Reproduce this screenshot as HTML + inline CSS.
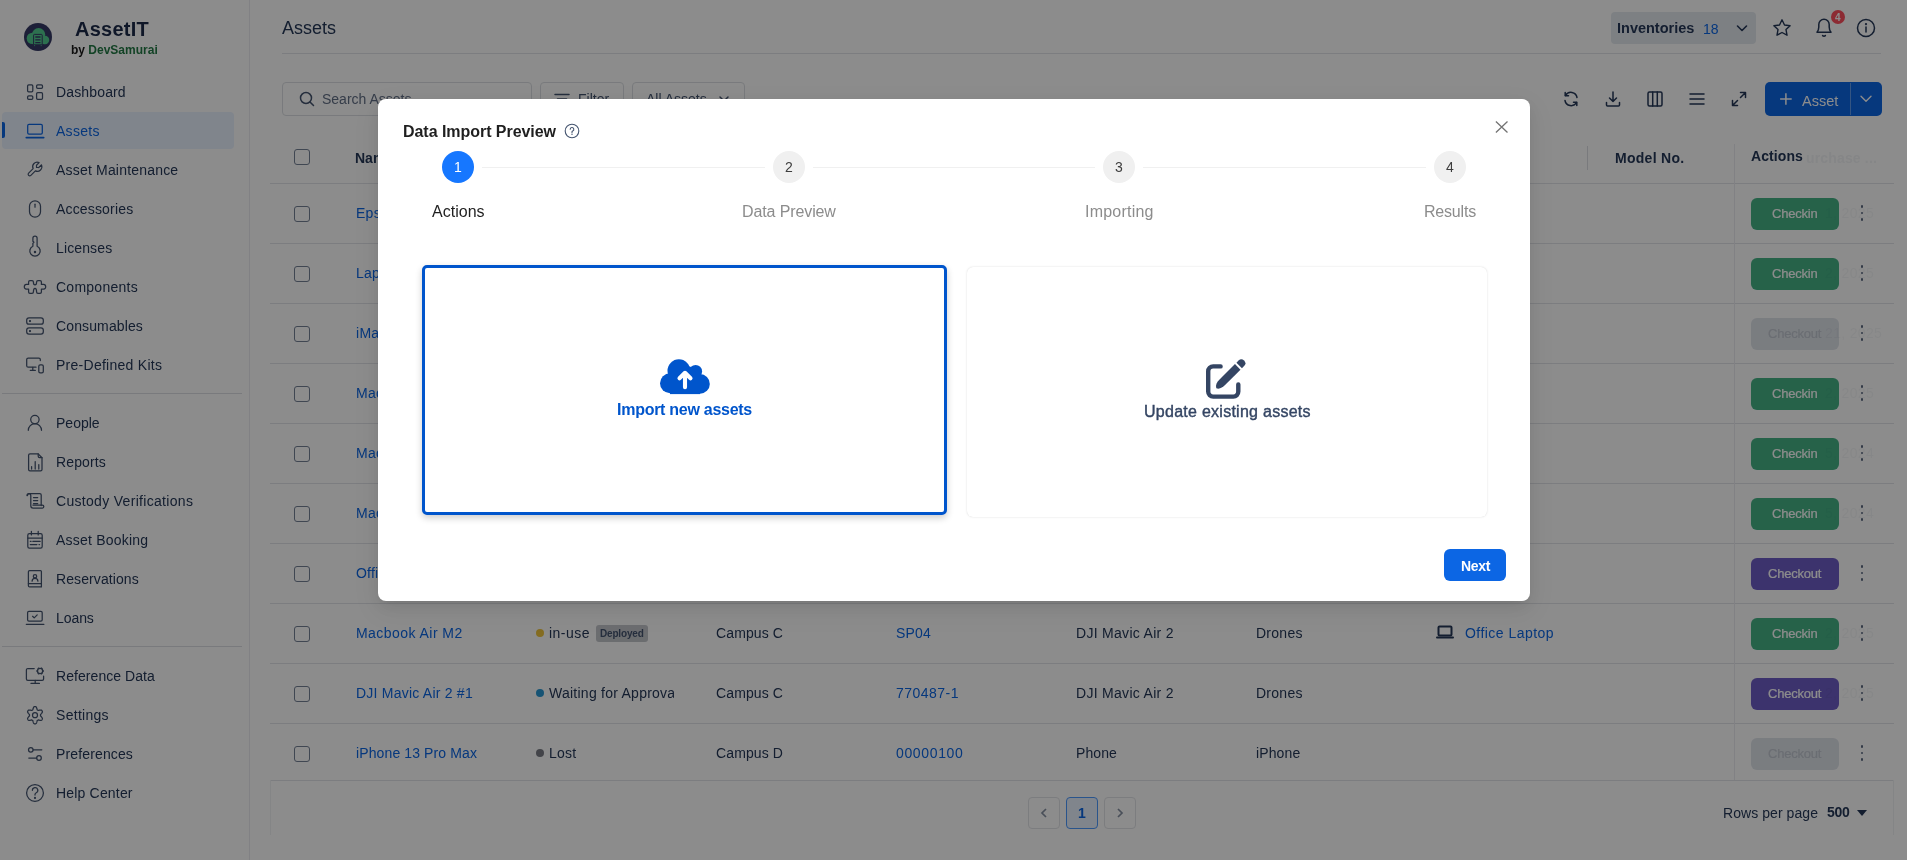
<!DOCTYPE html>
<html><head><meta charset="utf-8">
<style>
*{box-sizing:border-box;margin:0;padding:0}
html,body{width:1907px;height:860px;overflow:hidden;background:#fff;font-family:"Liberation Sans",sans-serif;color:#253858}
.abs{position:absolute}
.ico{position:absolute;width:18px;height:18px;fill:none;stroke-width:1.4;stroke-linecap:round;stroke-linejoin:round}
.txt{position:absolute;white-space:nowrap;will-change:transform}
.hline{position:absolute;height:1px;background:#e2e4e9}
.vline{position:absolute;width:1px;background:#ebecf0}
.cb{position:absolute;width:16px;height:16px;border:1.3px solid #758195;border-radius:3px;background:#fff}
.btn{position:absolute;height:32px;border-radius:6px;font-size:13.5px;line-height:32px;text-align:center;color:#fff;font-weight:500}
.kebab{position:absolute;width:3px;height:16px}
.kebab i{position:absolute;left:.2px;width:2.6px;height:2.6px;border-radius:50%;background:#5b6880}
.pg{position:absolute;width:32px;height:32px;border:1px solid #e2e4e8;border-radius:4px;background:#fff}
.pg svg{position:absolute;left:-1px;top:-1px}
.tb{position:absolute;height:34px;border:1px solid #dcdfe4;border-radius:4px;background:#fff}
#mask{position:absolute;left:0;top:0;width:1907px;height:860px;background:rgba(0,0,0,0.45)}
#modal{position:absolute;left:378px;top:99px;width:1152px;height:502px;background:#fff;border-radius:8px;box-shadow:0 6px 16px rgba(0,0,0,.08),0 3px 6px -4px rgba(0,0,0,.12),0 9px 28px 8px rgba(0,0,0,.05)}
</style></head><body>
<!-- SIDEBAR -->
<div class="abs" style="left:0;top:0;width:250px;height:860px;background:#fff;border-right:1px solid #ebecf0">
  <svg class="abs" style="left:24px;top:23px" width="28" height="28" viewBox="0 0 28 28">
    <circle cx="14" cy="14" r="14" fill="#363a66"/>
    <g fill="#52cc90"><circle cx="14.6" cy="11.6" r="6.6"/><circle cx="8.4" cy="15.4" r="5.7"/><circle cx="21.1" cy="17" r="4.15"/><rect x="8.4" y="15" width="12.7" height="6.1"/></g>
    <rect x="9.6" y="11.4" width="8.6" height="10.4" rx=".8" fill="#52cc90" stroke="#363a66" stroke-width="1"/>
    <path d="M11.3 14h5.2M11.3 16.8h5.2M11.3 19.6h5.2" stroke="#363a66" stroke-width="1.3"/>
    <path d="M10.6 22.3v.8M17.2 22.3v.8" stroke="#52cc90" stroke-width="1"/>
  </svg>
  <div class="txt" style="left:75px;top:18.6px;font-size:20px;line-height:20px;font-weight:700;color:#1d2b4a;letter-spacing:.25px">AssetIT</div>
  <div class="txt" style="left:70.5px;top:44.2px;font-size:12px;line-height:12px;font-weight:700;color:#1b1b1b;letter-spacing:0">by <span style="color:#237a45">DevSamurai</span></div>
<div class="txt" style="left:56.3px;top:85.35px;font-size:14px;line-height:14px;color:#253858;letter-spacing:0.146px;">Dashboard</div>
<div class="abs" style="left:2px;top:112px;width:231.5px;height:37px;border-radius:4px;background:#e9f2ff"></div>
<div class="abs" style="left:2px;top:122px;width:3px;height:16px;background:#0c66e4;border-radius:0 2px 2px 0"></div>
<div class="txt" style="left:56.3px;top:124.35px;font-size:14px;line-height:14px;color:#0c66e4;letter-spacing:0.281px;">Assets</div>
<div class="txt" style="left:56.3px;top:163.35px;font-size:14px;line-height:14px;color:#253858;letter-spacing:0.190px;">Asset Maintenance</div>
<div class="txt" style="left:56.3px;top:202.35px;font-size:14px;line-height:14px;color:#253858;letter-spacing:0.166px;">Accessories</div>
<div class="txt" style="left:56.3px;top:241.35px;font-size:14px;line-height:14px;color:#253858;letter-spacing:0.131px;">Licenses</div>
<div class="txt" style="left:56.3px;top:280.35px;font-size:14px;line-height:14px;color:#253858;letter-spacing:0.252px;">Components</div>
<div class="txt" style="left:56.3px;top:319.35px;font-size:14px;line-height:14px;color:#253858;letter-spacing:0.127px;">Consumables</div>
<div class="txt" style="left:56.3px;top:358.35px;font-size:14px;line-height:14px;color:#253858;letter-spacing:0.267px;">Pre-Defined Kits</div>
<div class="txt" style="left:56.3px;top:416.35px;font-size:14px;line-height:14px;color:#253858;letter-spacing:0.001px;">People</div>
<div class="txt" style="left:56.3px;top:455.35px;font-size:14px;line-height:14px;color:#253858;letter-spacing:0.140px;">Reports</div>
<div class="txt" style="left:56.3px;top:494.35px;font-size:14px;line-height:14px;color:#253858;letter-spacing:0.308px;">Custody Verifications</div>
<div class="txt" style="left:56.3px;top:533.35px;font-size:14px;line-height:14px;color:#253858;letter-spacing:0.208px;">Asset Booking</div>
<div class="txt" style="left:56.3px;top:572.35px;font-size:14px;line-height:14px;color:#253858;letter-spacing:0.091px;">Reservations</div>
<div class="txt" style="left:56.3px;top:611.35px;font-size:14px;line-height:14px;color:#253858;letter-spacing:-0.069px;">Loans</div>
<div class="txt" style="left:56.3px;top:669.35px;font-size:14px;line-height:14px;color:#253858;letter-spacing:0.060px;">Reference Data</div>
<div class="txt" style="left:56.3px;top:708.35px;font-size:14px;line-height:14px;color:#253858;letter-spacing:0.289px;">Settings</div>
<div class="txt" style="left:56.3px;top:747.35px;font-size:14px;line-height:14px;color:#253858;letter-spacing:0.138px;">Preferences</div>
<div class="txt" style="left:56.3px;top:786.35px;font-size:14px;line-height:14px;color:#253858;letter-spacing:0.181px;">Help Center</div>
<svg class="abs" style="left:0;top:0" width="250" height="860" viewBox="0 0 250 860" fill="none" stroke="#44546f" stroke-width="1.25" stroke-linecap="round" stroke-linejoin="round">
<rect x="27.6" y="84.8" width="5.2" height="7.1" rx="1.1"/><rect x="36.6" y="84.8" width="5.9" height="3.5" rx="1.1"/>
<rect x="27.6" y="95.8" width="5.2" height="3.5" rx="1.1"/><rect x="36.6" y="92.6" width="5.9" height="6.7" rx="1.1"/>
<g stroke="#0c66e4"><rect x="27.7" y="124.4" width="14.6" height="9.6" rx="1.3"/><path d="M26.3 137.6h17.4" stroke-width="1.7"/></g>
<g transform="translate(26,160) scale(0.75)"><path d="M17 10h-3v-3l3.5-3.5a6 6 0 0 0-8 8l-6 6a2 2 0 0 0 3 3l6-6a6 6 0 0 0 8-8l-3.5 3.5" stroke-width="1.6"/></g>
<rect x="29.5" y="200.8" width="11" height="16.4" rx="5.5"/><path d="M35 204.2v3"/>
<path d="M32.9 246.24V243.2L33.9 242.2L32.9 241.2V238.2A2.1 2.1 0 0 1 37.1 238.2V246.24A5.2 5.2 0 1 1 32.9 246.24z"/><circle cx="35" cy="252" r=".6" fill="#44546f"/>
<path d="M28.6 284.4V282Q28.6 280.6 30 280.6H32Q33.4 280.6 33.4 282C33.4 283.5 34 284.9 35 284.9C36 284.9 36.6 283.5 36.6 282Q36.6 280.6 38 280.6H40Q41.4 280.6 41.4 282V284.4H43.6C46.3 284.4 46.5 289 43.6 289H41.4V292Q41.4 293.4 40 293.4H38Q36.6 293.4 36.6 292C36.6 290 36 288.4 35 288.4C34 288.4 33.4 290 33.4 292Q33.4 293.4 32 293.4H30Q28.6 293.4 28.6 292V289H26.4C23.5 289 23.7 284.4 26.4 284.4Z"/>
<rect x="26.7" y="317.8" width="16.6" height="6.4" rx="2.3"/><rect x="26.7" y="327.8" width="16.6" height="6.2" rx="2.3"/>
<circle cx="30" cy="321" r=".5" fill="#44546f"/><circle cx="30" cy="331" r=".5" fill="#44546f"/>
<path d="M40.3 360.6V359.6a1.5 1.5 0 0 0-1.5-1.5H28.2a1.5 1.5 0 0 0-1.5 1.5v6.1a1.5 1.5 0 0 0 1.5 1.5H36"/><path d="M30.3 370.4h5M32.8 367.3v3.1"/><rect x="38.8" y="364.9" width="4.5" height="8" rx="1.4"/>
<circle cx="34.9" cy="419.6" r="4.2"/><path d="M28.3 430.3a6.6 6.6 0 0 1 13.2 0"/>
<path d="M38.2 453.9H30a1.4 1.4 0 0 0-1.4 1.4v14.3a1.4 1.4 0 0 0 1.4 1.4h10.6a1.4 1.4 0 0 0 1.4-1.4V457.7z"/><path d="M38.2 453.9v2.4a1.4 1.4 0 0 0 1.4 1.4H42"/><path d="M31.6 469v-2.4M35.2 469v-7.4M38.8 469v-4.4"/>
<path d="M29.4 493.6h10.4a1.4 1.4 0 0 1 1.4 1.4v10.6"/><path d="M27 495.5a1.9 1.9 0 0 1 3.8 0v10.3a2.3 2.3 0 0 0 2.3 2.3h9.2a1.5 1.5 0 0 0 0-3H32.9"/><path d="M29.4 493.6a1.9 1.9 0 0 0-1.9 1.9"/><path d="M33.5 497.6h4.2M33.5 500.6h4.2M33.5 503.6h4.2"/>
<rect x="27.8" y="533.6" width="14.4" height="14.5" rx="1.6"/><path d="M31.4 531.3v3.6M38.2 531.3v3.6M27.8 538h14.4M30.3 541.3h.8M32.8 541.3h7.4M30.3 544.6h6.6M39 544.6h.5"/>
<path d="M29.6 570.6h10.9a.9.9 0 0 1 .9.9v15.4H29.6a1.2 1.2 0 0 1-1.2-1.2V571.8a1.2 1.2 0 0 1 1.2-1.2z"/><path d="M28.4 583.6h13"/><circle cx="35" cy="576.2" r="1.7"/><path d="M32.1 581.2a2.9 2.9 0 0 1 5.8 0"/>
<rect x="27.6" y="611.4" width="14.6" height="9.6" rx="1.3"/><path d="M26.3 624.3h17.6"/><path d="M32.6 616.3l1.6 1.6 3-3"/>
<path d="M34.2 668.5h-6.4a1.4 1.4 0 0 0-1.4 1.4v9a1.4 1.4 0 0 0 1.4 1.4h14.4a1.4 1.4 0 0 0 1.4-1.4v-2.7"/><path d="M31 683.4h8.4M35.2 680.3v3.1"/>
<circle cx="40.1" cy="671" r="2.6" stroke-width="1.3"/><path d="M42.90 671.00L43.90 671.00M41.50 668.58L42.00 667.71M38.70 668.58L38.20 667.71M37.30 671.00L36.30 671.00M38.70 673.42L38.20 674.29M41.50 673.42L42.00 674.29" stroke-width="1.7" stroke-linecap="butt"/>
<path d="M40.51 715.20 L40.50 714.95 L40.49 714.69 L40.62 714.42 L40.92 714.10 L41.26 713.74 L41.61 713.34 L41.93 712.90 L42.21 712.44 L42.41 711.97 L42.40 711.57 L42.25 711.23 L42.08 710.90 L41.89 710.58 L41.69 710.27 L41.36 710.06 L40.88 710.01 L40.36 710.03 L39.84 710.11 L39.33 710.23 L38.86 710.35 L38.45 710.47 L38.16 710.45 L37.96 710.31 L37.76 710.18 L37.54 710.06 L37.33 709.94 L37.17 709.69 L37.06 709.26 L36.93 708.77 L36.77 708.25 L36.57 707.73 L36.33 707.25 L36.05 706.83 L35.71 706.63 L35.36 706.61 L35.00 706.60 L34.64 706.61 L34.29 706.63 L33.95 706.83 L33.67 707.25 L33.43 707.73 L33.23 708.25 L33.07 708.77 L32.94 709.26 L32.83 709.69 L32.67 709.94 L32.46 710.06 L32.25 710.18 L32.04 710.31 L31.84 710.45 L31.55 710.47 L31.14 710.35 L30.67 710.23 L30.16 710.11 L29.64 710.03 L29.12 710.01 L28.64 710.06 L28.31 710.27 L28.11 710.58 L27.92 710.90 L27.75 711.23 L27.60 711.57 L27.59 711.97 L27.79 712.44 L28.07 712.90 L28.39 713.34 L28.74 713.74 L29.08 714.10 L29.38 714.42 L29.51 714.69 L29.50 714.95 L29.49 715.20 L29.50 715.45 L29.51 715.71 L29.38 715.98 L29.08 716.30 L28.74 716.66 L28.39 717.06 L28.07 717.50 L27.79 717.96 L27.59 718.43 L27.60 718.83 L27.75 719.17 L27.92 719.50 L28.11 719.82 L28.31 720.13 L28.64 720.34 L29.12 720.39 L29.64 720.37 L30.16 720.29 L30.67 720.17 L31.14 720.05 L31.55 719.93 L31.84 719.95 L32.04 720.09 L32.24 720.22 L32.46 720.34 L32.67 720.46 L32.83 720.71 L32.94 721.14 L33.07 721.63 L33.23 722.15 L33.43 722.67 L33.67 723.15 L33.95 723.57 L34.29 723.77 L34.64 723.79 L35.00 723.80 L35.36 723.79 L35.71 723.77 L36.05 723.57 L36.33 723.15 L36.57 722.67 L36.77 722.15 L36.93 721.63 L37.06 721.14 L37.17 720.71 L37.33 720.46 L37.54 720.34 L37.75 720.22 L37.96 720.09 L38.16 719.95 L38.45 719.93 L38.86 720.05 L39.33 720.17 L39.84 720.29 L40.36 720.37 L40.88 720.39 L41.36 720.34 L41.69 720.13 L41.89 719.82 L42.08 719.50 L42.25 719.17 L42.40 718.83 L42.41 718.43 L42.21 717.96 L41.93 717.50 L41.61 717.06 L41.26 716.66 L40.92 716.30 L40.62 715.98 L40.49 715.71 L40.50 715.45Z"/><circle cx="35" cy="715.2" r="2.5"/>
<circle cx="30.8" cy="749.8" r="2.3"/><path d="M33.2 749.8h8.6"/><circle cx="39" cy="758" r="2.3"/><path d="M28.8 758h7.8"/>
<circle cx="35" cy="792.9" r="8.4"/><path d="M32.4 790.3a2.7 2.7 0 1 1 3.9 2.4c-.8.4-1.3 1-1.3 1.8v.6"/><circle cx="35" cy="797.9" r=".45" fill="#44546f"/>
</svg>
  <div class="abs" style="left:2px;top:393px;width:240px;height:1px;background:#dcdfe4"></div>
  <div class="abs" style="left:2px;top:646px;width:240px;height:1px;background:#dcdfe4"></div>
</div>
<!-- MAIN HEADER -->
<div class="txt" style="left:282px;top:19.2px;font-size:18px;line-height:18px;color:#253858">Assets</div>
<div class="hline" style="left:282px;top:53px;width:1599px"></div>
<div class="abs" style="left:1611px;top:12px;width:145px;height:32px;border-radius:4px;background:#e4e9ef"></div>
<div class="txt" style="left:1617px;top:21.3px;font-size:14.5px;line-height:14.5px;font-weight:700;color:#253858">Inventories</div>
<div class="txt" style="left:1703px;top:22px;font-size:14px;line-height:14px;color:#0c66e4">18</div>
<svg class="ico" style="left:1733px;top:19px;stroke:#253858;stroke-width:1.6" viewBox="0 0 18 18"><path d="M4.5 7l4.5 4.5L13.5 7"/></svg>
<svg class="ico" style="left:1772px;top:18px;width:20px;height:20px;stroke:#253858;stroke-width:1.4" viewBox="0 0 20 20"><path d="M10 1.8l2.5 5.2 5.6.7-4.1 3.9 1 5.6L10 14.5l-5 2.7 1-5.6-4.1-3.9 5.6-.7z"/></svg>
<svg class="ico" style="left:1814px;top:17px;width:20px;height:22px;stroke:#253858;stroke-width:1.5" viewBox="0 0 20 22"><path d="M3 15.2c1.3-1.6 1.8-3.2 1.8-5.2V7.5a5.2 5.2 0 0 1 10.4 0V10c0 2 .5 3.6 1.8 5.2z"/><path d="M8.6 18.6c.8.7 2 .7 2.8 0"/></svg>
<div class="abs" style="left:1830.5px;top:10px;width:14px;height:14px;border-radius:50%;background:#ff4f5e"></div>
<div class="txt" style="left:1834.7px;top:12.5px;font-size:10px;line-height:10px;font-weight:700;color:#fff">4</div>
<svg class="ico" style="left:1856px;top:18px;width:20px;height:20px;stroke:#253858;stroke-width:1.5" viewBox="0 0 20 20"><circle cx="10" cy="10" r="8.5"/><path d="M10 9v5"/><circle cx="10" cy="6.2" r=".4" fill="#253858"/></svg>

<!-- TOOLBAR -->
<div class="tb" style="left:282px;top:82px;width:250px"></div>
<svg class="ico" style="left:298px;top:90px;stroke:#44546f;stroke-width:1.5" viewBox="0 0 18 18"><circle cx="8" cy="8" r="5.5"/><path d="M12 12l3.5 3.5"/></svg>
<div class="txt" style="left:322px;top:92px;font-size:14px;line-height:14px;color:#626f86">Search Assets</div>
<div class="tb" style="left:540px;top:82px;width:84px"></div>
<svg class="ico" style="left:553px;top:90px;stroke:#44546f;stroke-width:1.5" viewBox="0 0 18 18"><path d="M2 4.5h14M4.5 9h9M7 13.5h4"/></svg>
<div class="txt" style="left:578px;top:92px;font-size:14px;line-height:14px;color:#44546f">Filter</div>
<div class="tb" style="left:632px;top:82px;width:113px"></div>
<div class="txt" style="left:646px;top:92px;font-size:14px;line-height:14px;color:#44546f">All Assets</div>
<svg class="ico" style="left:715px;top:90px;stroke:#44546f;stroke-width:1.5" viewBox="0 0 18 18"><path d="M5 7l4 4 4-4"/></svg>

<svg class="ico" style="left:1562px;top:90px;stroke:#253858;stroke-width:1.5" viewBox="0 0 18 18"><path d="M15 7.5A6.2 6.2 0 0 0 3.5 5.5M3 10.5a6.2 6.2 0 0 0 11.5 2"/><path d="M3.2 2.5v3.3h3.3M14.8 15.5v-3.3h-3.3"/></svg>
<svg class="ico" style="left:1604px;top:90px;stroke:#253858;stroke-width:1.5" viewBox="0 0 18 18"><path d="M9 2v9.5M5.5 8l3.5 3.5L12.5 8M2.5 12.5v2.5a1 1 0 0 0 1 1h11a1 1 0 0 0 1-1v-2.5"/></svg>
<svg class="ico" style="left:1646px;top:90px;stroke:#253858;stroke-width:1.5" viewBox="0 0 18 18"><rect x="2" y="2" width="14" height="14" rx="1.5"/><path d="M6.7 2v14M11.3 2v14"/></svg>
<svg class="ico" style="left:1688px;top:90px;stroke:#253858;stroke-width:1.5" viewBox="0 0 18 18"><path d="M2 4h14M2 9h14M2 14h14"/></svg>
<svg class="ico" style="left:1730px;top:90px;stroke:#253858;stroke-width:1.5" viewBox="0 0 18 18"><path d="M10.5 2.5h5v5M15.5 2.5l-5 5M7.5 15.5h-5v-5M2.5 15.5l5-5"/></svg>
<div class="abs" style="left:1765px;top:82px;width:117px;height:34px;border-radius:5px;background:#0c66e4"></div>
<div class="abs" style="left:1850px;top:83px;width:1px;height:32px;background:rgba(255,255,255,.35)"></div>
<svg class="ico" style="left:1777px;top:90px;stroke:#fff;stroke-width:1.5;stroke-linecap:butt" viewBox="0 0 18 18"><path d="M8.9 3.3v11.4M3.1 9h11.6"/></svg>
<div class="txt" style="left:1802px;top:93.5px;font-size:14.5px;line-height:14.5px;color:#fff">Asset</div>
<svg class="ico" style="left:1857px;top:90px;stroke:#fff;stroke-width:1.4" viewBox="0 0 18 18"><path d="M4 6.2l5 5 5-5"/></svg>

<!-- TABLE -->
<div class="hline" style="left:270px;top:183px;width:1624px"></div>
<div class="hline" style="left:270px;top:243px;width:1624px"></div>
<div class="hline" style="left:270px;top:303px;width:1624px"></div>
<div class="hline" style="left:270px;top:363px;width:1624px"></div>
<div class="hline" style="left:270px;top:423px;width:1624px"></div>
<div class="hline" style="left:270px;top:483px;width:1624px"></div>
<div class="hline" style="left:270px;top:543px;width:1624px"></div>
<div class="hline" style="left:270px;top:603px;width:1624px"></div>
<div class="hline" style="left:270px;top:663px;width:1624px"></div>
<div class="hline" style="left:270px;top:723px;width:1624px"></div>
<div class="hline" style="left:270px;top:780px;width:1624px"></div>
<div class="vline" style="left:270px;top:780px;height:55px;background:#f1f2f4"></div>
<div class="vline" style="left:1893px;top:780px;height:55px;background:#f1f2f4"></div>
<div class="vline" style="left:1734px;top:144px;height:636px"></div>
<div class="vline" style="left:1587px;top:146px;height:24px;background:#dcdfe4"></div>
<div class="cb" style="left:294px;top:149px"></div>
<div class="txt" style="left:355px;top:151.15px;font-size:14px;line-height:14px;font-weight:700;color:#253858;">Name</div>
<div class="txt" style="left:1615px;top:151.15px;font-size:14px;line-height:14px;font-weight:700;color:#253858;letter-spacing:0.280px;">Model No.</div>
<div class="txt" style="left:1805.5px;top:150.75px;font-size:14px;line-height:14px;font-weight:700;color:#f3f4f6;letter-spacing:0.159px;">urchase ...</div>
<div class="txt" style="left:1751px;top:149.15px;font-size:14px;line-height:14px;font-weight:700;color:#253858;letter-spacing:0.095px;">Actions</div>
<div class="cb" style="left:294px;top:206px"></div>
<div class="txt" style="left:356.3px;top:206.15px;font-size:14px;line-height:14px;color:#0c66e4;letter-spacing:0.261px;">Epson Printer</div>
<div class="abs" style="left:1751px;top:198px;width:88px;height:32px;border-radius:6px;background:#45b386"></div>
<div class="txt" style="left:1825px;top:206.15px;font-size:14px;line-height:14px;color:rgba(23,43,77,0.045);letter-spacing:0.334px;">1, 2025</div>
<div class="txt" style="left:1772.3px;top:206.60px;font-size:13px;line-height:13px;color:#fff;letter-spacing:-0.224px;-webkit-text-stroke:.2px #fff;">Checkin</div>
<div class="kebab" style="left:1860.5px;top:205px"><i style="top:0"></i><i style="top:6.5px"></i><i style="top:13px"></i></div>
<div class="cb" style="left:294px;top:266px"></div>
<div class="txt" style="left:356.3px;top:266.15px;font-size:14px;line-height:14px;color:#0c66e4;letter-spacing:0.258px;">Laptop Dell</div>
<div class="abs" style="left:1751px;top:258px;width:88px;height:32px;border-radius:6px;background:#45b386"></div>
<div class="txt" style="left:1825px;top:266.15px;font-size:14px;line-height:14px;color:rgba(23,43,77,0.045);letter-spacing:0.334px;">2, 2025</div>
<div class="txt" style="left:1772.3px;top:266.60px;font-size:13px;line-height:13px;color:#fff;letter-spacing:-0.224px;-webkit-text-stroke:.2px #fff;">Checkin</div>
<div class="kebab" style="left:1860.5px;top:265px"><i style="top:0"></i><i style="top:6.5px"></i><i style="top:13px"></i></div>
<div class="cb" style="left:294px;top:326px"></div>
<div class="txt" style="left:356.3px;top:326.15px;font-size:14px;line-height:14px;color:#0c66e4;letter-spacing:0.280px;">iMac 24</div>
<div class="abs" style="left:1751px;top:318px;width:88px;height:32px;border-radius:6px;background:#dfe3ea"></div>
<div class="txt" style="left:1825px;top:326.15px;font-size:14px;line-height:14px;color:rgba(23,43,77,0.045);letter-spacing:0.341px;">21, 2025</div>
<div class="txt" style="left:1768.4px;top:326.60px;font-size:13px;line-height:13px;color:#c1c7d0;letter-spacing:-0.215px;-webkit-text-stroke:.2px #c1c7d0;">Checkout</div>
<div class="kebab" style="left:1860.5px;top:325px"><i style="top:0"></i><i style="top:6.5px"></i><i style="top:13px"></i></div>
<div class="cb" style="left:294px;top:386px"></div>
<div class="txt" style="left:356.3px;top:386.15px;font-size:14px;line-height:14px;color:#0c66e4;letter-spacing:0.300px;">Macbook Pro</div>
<div class="abs" style="left:1751px;top:378px;width:88px;height:32px;border-radius:6px;background:#45b386"></div>
<div class="txt" style="left:1825px;top:386.15px;font-size:14px;line-height:14px;color:rgba(23,43,77,0.045);letter-spacing:0.334px;">2, 2025</div>
<div class="txt" style="left:1772.3px;top:386.60px;font-size:13px;line-height:13px;color:#fff;letter-spacing:-0.224px;-webkit-text-stroke:.2px #fff;">Checkin</div>
<div class="kebab" style="left:1860.5px;top:385px"><i style="top:0"></i><i style="top:6.5px"></i><i style="top:13px"></i></div>
<div class="cb" style="left:294px;top:446px"></div>
<div class="txt" style="left:356.3px;top:446.15px;font-size:14px;line-height:14px;color:#0c66e4;letter-spacing:0.280px;">Macbook Air</div>
<div class="abs" style="left:1751px;top:438px;width:88px;height:32px;border-radius:6px;background:#45b386"></div>
<div class="txt" style="left:1825px;top:446.15px;font-size:14px;line-height:14px;color:rgba(23,43,77,0.045);letter-spacing:0.334px;">5, 2024</div>
<div class="txt" style="left:1772.3px;top:446.60px;font-size:13px;line-height:13px;color:#fff;letter-spacing:-0.224px;-webkit-text-stroke:.2px #fff;">Checkin</div>
<div class="kebab" style="left:1860.5px;top:445px"><i style="top:0"></i><i style="top:6.5px"></i><i style="top:13px"></i></div>
<div class="cb" style="left:294px;top:506px"></div>
<div class="txt" style="left:356.3px;top:506.15px;font-size:14px;line-height:14px;color:#0c66e4;letter-spacing:0.321px;">Macbook M1</div>
<div class="abs" style="left:1751px;top:498px;width:88px;height:32px;border-radius:6px;background:#45b386"></div>
<div class="txt" style="left:1825px;top:506.15px;font-size:14px;line-height:14px;color:rgba(23,43,77,0.045);letter-spacing:0.334px;">5, 2024</div>
<div class="txt" style="left:1772.3px;top:506.60px;font-size:13px;line-height:13px;color:#fff;letter-spacing:-0.224px;-webkit-text-stroke:.2px #fff;">Checkin</div>
<div class="kebab" style="left:1860.5px;top:505px"><i style="top:0"></i><i style="top:6.5px"></i><i style="top:13px"></i></div>
<div class="cb" style="left:294px;top:566px"></div>
<div class="txt" style="left:356.3px;top:566.15px;font-size:14px;line-height:14px;color:#0c66e4;letter-spacing:0.233px;">Office Printer</div>
<div class="abs" style="left:1751px;top:558px;width:88px;height:32px;border-radius:6px;background:#6e5dc6"></div>
<div class="txt" style="left:1768.4px;top:566.60px;font-size:13px;line-height:13px;color:#fff;letter-spacing:-0.215px;-webkit-text-stroke:.2px #fff;">Checkout</div>
<div class="kebab" style="left:1860.5px;top:565px"><i style="top:0"></i><i style="top:6.5px"></i><i style="top:13px"></i></div>
<div class="cb" style="left:294px;top:626px"></div>
<div class="txt" style="left:356.3px;top:626.15px;font-size:14px;line-height:14px;color:#0c66e4;letter-spacing:0.452px;">Macbook Air M2</div>
<div class="abs" style="left:536px;top:629px;width:8px;height:8px;border-radius:50%;background:#f0c53c"></div>
<div class="txt" style="left:549.2px;top:626.15px;font-size:14px;line-height:14px;color:#253858;letter-spacing:0.461px;">in-use</div>
<div class="abs" style="left:596px;top:625px;width:52px;height:17px;border-radius:3px;background:#c4c6cb"></div>
<div class="txt" style="left:600px;top:628.53px;font-size:10px;line-height:10px;font-weight:700;color:#44546f;letter-spacing:-0.176px;">Deployed</div>
<div class="txt" style="left:716.3px;top:626.15px;font-size:14px;line-height:14px;color:#253858;letter-spacing:0.121px;">Campus C</div>
<div class="txt" style="left:896.4px;top:626.15px;font-size:14px;line-height:14px;color:#0c66e4;letter-spacing:0.138px;">SP04</div>
<div class="txt" style="left:1076px;top:626.15px;font-size:14px;line-height:14px;color:#253858;letter-spacing:0.297px;">DJI Mavic Air 2</div>
<div class="txt" style="left:1255.9px;top:626.15px;font-size:14px;line-height:14px;color:#253858;letter-spacing:0.261px;">Drones</div>
<svg class="ico" style="left:1436px;top:625px;width:18px;height:14px;stroke:#253858;stroke-width:2" viewBox="0 0 18 14"><rect x="2.5" y="1.5" width="13" height="9" rx="1"/><path d="M1 12.5h16"/></svg>
<div class="txt" style="left:1465px;top:626.15px;font-size:14px;line-height:14px;color:#0c66e4;letter-spacing:0.460px;">Office Laptop</div>
<div class="abs" style="left:1751px;top:618px;width:88px;height:32px;border-radius:6px;background:#45b386"></div>
<div class="txt" style="left:1825px;top:626.15px;font-size:14px;line-height:14px;color:rgba(23,43,77,0.045);letter-spacing:0.334px;">2, 2025</div>
<div class="txt" style="left:1772.3px;top:626.60px;font-size:13px;line-height:13px;color:#fff;letter-spacing:-0.224px;-webkit-text-stroke:.2px #fff;">Checkin</div>
<div class="kebab" style="left:1860.5px;top:625px"><i style="top:0"></i><i style="top:6.5px"></i><i style="top:13px"></i></div>
<div class="cb" style="left:294px;top:686px"></div>
<div class="txt" style="left:356.3px;top:686.15px;font-size:14px;line-height:14px;color:#0c66e4;letter-spacing:0.227px;">DJI Mavic Air 2 #1</div>
<div class="abs" style="left:536px;top:689px;width:8px;height:8px;border-radius:50%;background:#2898d4"></div>
<div class="abs" style="left:549px;top:683px;width:125px;height:20px;overflow:hidden"><div class="txt" style="left:0px;top:3.15px;font-size:14px;line-height:14px;color:#253858;letter-spacing:0.250px;">Waiting for Approval</div></div>
<div class="txt" style="left:716.3px;top:686.15px;font-size:14px;line-height:14px;color:#253858;letter-spacing:0.121px;">Campus C</div>
<div class="txt" style="left:896.4px;top:686.15px;font-size:14px;line-height:14px;color:#0c66e4;letter-spacing:0.479px;">770487-1</div>
<div class="txt" style="left:1076px;top:686.15px;font-size:14px;line-height:14px;color:#253858;letter-spacing:0.297px;">DJI Mavic Air 2</div>
<div class="txt" style="left:1255.9px;top:686.15px;font-size:14px;line-height:14px;color:#253858;letter-spacing:0.261px;">Drones</div>
<div class="abs" style="left:1751px;top:678px;width:88px;height:32px;border-radius:6px;background:#6e5dc6"></div>
<div class="txt" style="left:1825px;top:686.15px;font-size:14px;line-height:14px;color:rgba(23,43,77,0.045);letter-spacing:0.334px;">2, 2025</div>
<div class="txt" style="left:1768.4px;top:686.60px;font-size:13px;line-height:13px;color:#fff;letter-spacing:-0.215px;-webkit-text-stroke:.2px #fff;">Checkout</div>
<div class="kebab" style="left:1860.5px;top:685px"><i style="top:0"></i><i style="top:6.5px"></i><i style="top:13px"></i></div>
<div class="cb" style="left:294px;top:746px"></div>
<div class="txt" style="left:356.3px;top:746.15px;font-size:14px;line-height:14px;color:#0c66e4;letter-spacing:0.114px;">iPhone 13 Pro Max</div>
<div class="abs" style="left:536px;top:749px;width:8px;height:8px;border-radius:50%;background:#7a7d85"></div>
<div class="txt" style="left:549.2px;top:746.15px;font-size:14px;line-height:14px;color:#253858;letter-spacing:0.210px;">Lost</div>
<div class="txt" style="left:716.3px;top:746.15px;font-size:14px;line-height:14px;color:#253858;letter-spacing:0.121px;">Campus D</div>
<div class="txt" style="left:896.4px;top:746.15px;font-size:14px;line-height:14px;color:#0c66e4;letter-spacing:0.651px;">00000100</div>
<div class="txt" style="left:1076px;top:746.15px;font-size:14px;line-height:14px;color:#253858;letter-spacing:0.083px;">Phone</div>
<div class="txt" style="left:1255.9px;top:746.15px;font-size:14px;line-height:14px;color:#253858;letter-spacing:0.118px;">iPhone</div>
<div class="abs" style="left:1751px;top:738px;width:88px;height:32px;border-radius:6px;background:#dfe3ea"></div>
<div class="txt" style="left:1768.4px;top:746.60px;font-size:13px;line-height:13px;color:#c1c7d0;letter-spacing:-0.215px;-webkit-text-stroke:.2px #c1c7d0;">Checkout</div>
<div class="kebab" style="left:1860.5px;top:745px"><i style="top:0"></i><i style="top:6.5px"></i><i style="top:13px"></i></div>
<div class="pg" style="left:1028px;top:797px"><svg viewBox="0 0 32 32" width="32" height="32"><path d="M18 12l-4 4 4 4" fill="none" stroke="#8590a2" stroke-width="1.7"/></svg></div>
<div class="pg" style="left:1066px;top:797px;border-color:#4c9aff;background:#e9f2ff"></div>
<div class="txt" style="left:1077.6px;top:806.15px;font-size:14px;line-height:14px;font-weight:700;color:#0c66e4;">1</div>
<div class="pg" style="left:1104px;top:797px"><svg viewBox="0 0 32 32" width="32" height="32"><path d="M14 12l4 4-4 4" fill="none" stroke="#8590a2" stroke-width="1.7"/></svg></div>
<div class="txt" style="left:1722.5px;top:806.15px;font-size:14px;line-height:14px;color:#253858;letter-spacing:0.064px;">Rows per page</div>
<div class="txt" style="left:1826.5px;top:804.65px;font-size:14px;line-height:14px;font-weight:700;color:#253858;letter-spacing:-0.286px;">500</div>
<svg class="abs" style="left:1857px;top:810px" width="10" height="6" viewBox="0 0 10 6"><path d="M0 0h10L5 6z" fill="#253858"/></svg>

<div id="mask"></div>
<div id="modal"></div>
<div class="txt" style="left:402.5px;top:123.96px;font-size:16px;line-height:16px;font-weight:700;color:#1f1f1f;letter-spacing:-0.044px;">Data Import Preview</div>
<svg class="ico" style="left:564px;top:123px;width:16px;height:16px;stroke:#44546f;stroke-width:1.1" viewBox="0 0 16 16"><circle cx="8" cy="8" r="6.8"/><path d="M6.2 6.2a1.8 1.8 0 1 1 2.5 1.7c-.4.2-.7.5-.7 1v.6"/><circle cx="8" cy="11.3" r=".25" fill="#44546f"/></svg>
<svg class="ico" style="left:1494px;top:119px;width:16px;height:16px;stroke:#737373;stroke-width:1.3;stroke-linecap:butt" viewBox="0 0 16 16"><path d="M1.9 2.5L13.5 13.5M13.5 2.5L1.9 13.5"/></svg>
<div class="abs" style="left:482px;top:166.5px;width:282.5px;height:1px;background:#f0f0f0"></div>
<div class="abs" style="left:812.5px;top:166.5px;width:282.5px;height:1px;background:#f0f0f0"></div>
<div class="abs" style="left:1143px;top:166.5px;width:283px;height:1px;background:#f0f0f0"></div>
<div class="abs" style="left:442px;top:151px;width:32px;height:32px;border-radius:50%;background:#1677ff"></div>
<div class="txt" style="left:442px;top:159px;width:32px;text-align:center;font-size:14px;line-height:16px;color:#fff">1</div>
<div class="txt" style="left:431.7px;top:204.16px;font-size:16px;line-height:16px;color:#1f1f1f;letter-spacing:0.019px;">Actions</div>
<div class="abs" style="left:772.5px;top:151px;width:32px;height:32px;border-radius:50%;background:#f0f0f0"></div>
<div class="txt" style="left:772.5px;top:159px;width:32px;text-align:center;font-size:14px;line-height:16px;color:#3d3d3d">2</div>
<div class="txt" style="left:741.6px;top:204.16px;font-size:16px;line-height:16px;color:#8c8c8c;letter-spacing:-0.112px;">Data Preview</div>
<div class="abs" style="left:1103px;top:151px;width:32px;height:32px;border-radius:50%;background:#f0f0f0"></div>
<div class="txt" style="left:1103px;top:159px;width:32px;text-align:center;font-size:14px;line-height:16px;color:#3d3d3d">3</div>
<div class="txt" style="left:1084.65px;top:204.16px;font-size:16px;line-height:16px;color:#8c8c8c;letter-spacing:0.223px;">Importing</div>
<div class="abs" style="left:1434px;top:151px;width:32px;height:32px;border-radius:50%;background:#f0f0f0"></div>
<div class="txt" style="left:1434px;top:159px;width:32px;text-align:center;font-size:14px;line-height:16px;color:#3d3d3d">4</div>
<div class="txt" style="left:1424.0px;top:204.16px;font-size:16px;line-height:16px;color:#8c8c8c;letter-spacing:-0.193px;">Results</div>
<div class="abs" style="left:422px;top:265px;width:525px;height:250px;border:3px solid #0055cc;border-radius:5px;background:#fff;box-shadow:0 3px 7px rgba(0,0,0,.2)"></div>
<div class="abs" style="left:966.5px;top:266.5px;width:520px;height:250.5px;border-radius:6px;background:#fff;box-shadow:0 0 3px rgba(0,0,0,.08),0 0 1px rgba(0,0,0,.12)"></div>
<svg class="abs" style="left:654px;top:352px" width="62" height="48" viewBox="0 0 62 48"><g fill="#0055cc"><circle cx="24.9" cy="18.7" r="11.4"/><circle cx="41.6" cy="19.4" r="6.5"/><circle cx="33" cy="23" r="9"/><circle cx="16" cy="31.2" r="10"/><circle cx="46" cy="31.9" r="9.8"/><rect x="16" y="22" width="30" height="20.1"/></g><path d="M31 35.2V21.3M25.5 26.3L31 20.8 36.5 26.3" fill="none" stroke="#fff" stroke-width="4.1" stroke-linecap="round" stroke-linejoin="round"/></svg>
<div class="txt" style="left:617.3px;top:402.06px;font-size:16px;line-height:16px;font-weight:700;color:#0055cc;letter-spacing:-0.271px;">Import new assets</div>
<svg class="abs" style="left:1204px;top:358px" width="44" height="42" viewBox="0 0 44 42"><path d="M16.6 8.4H9.2a5 5 0 0 0-5 5v20.2a5 5 0 0 0 5 5h20.1a5 5 0 0 0 5-5v-7.1" fill="none" stroke="#344563" stroke-width="4.4" stroke-linecap="round"/><g transform="translate(12.3,30.3) rotate(-45)" fill="#344563"><path d="M0 0C1.5-3 4.5-3.9 8.5-3.9H30.3V3.9H8.5C4.5 3.9 1.5 3 0 0z"/><path d="M32.4-3.9H35.4a3.9 3.9 0 0 1 0 7.8H32.4z"/></g></svg>
<div class="txt" style="left:1143.5px;top:404.06px;font-size:16px;line-height:16px;color:#344563;letter-spacing:0.265px;-webkit-text-stroke:.4px #344563;">Update existing assets</div>
<div class="abs" style="left:1444px;top:549px;width:62px;height:32px;border-radius:6px;background:#0c66e4"></div>
<div class="txt" style="left:1460.8px;top:559.45px;font-size:14px;line-height:14px;font-weight:700;color:#fff;letter-spacing:-0.336px;">Next</div>
</body></html>
